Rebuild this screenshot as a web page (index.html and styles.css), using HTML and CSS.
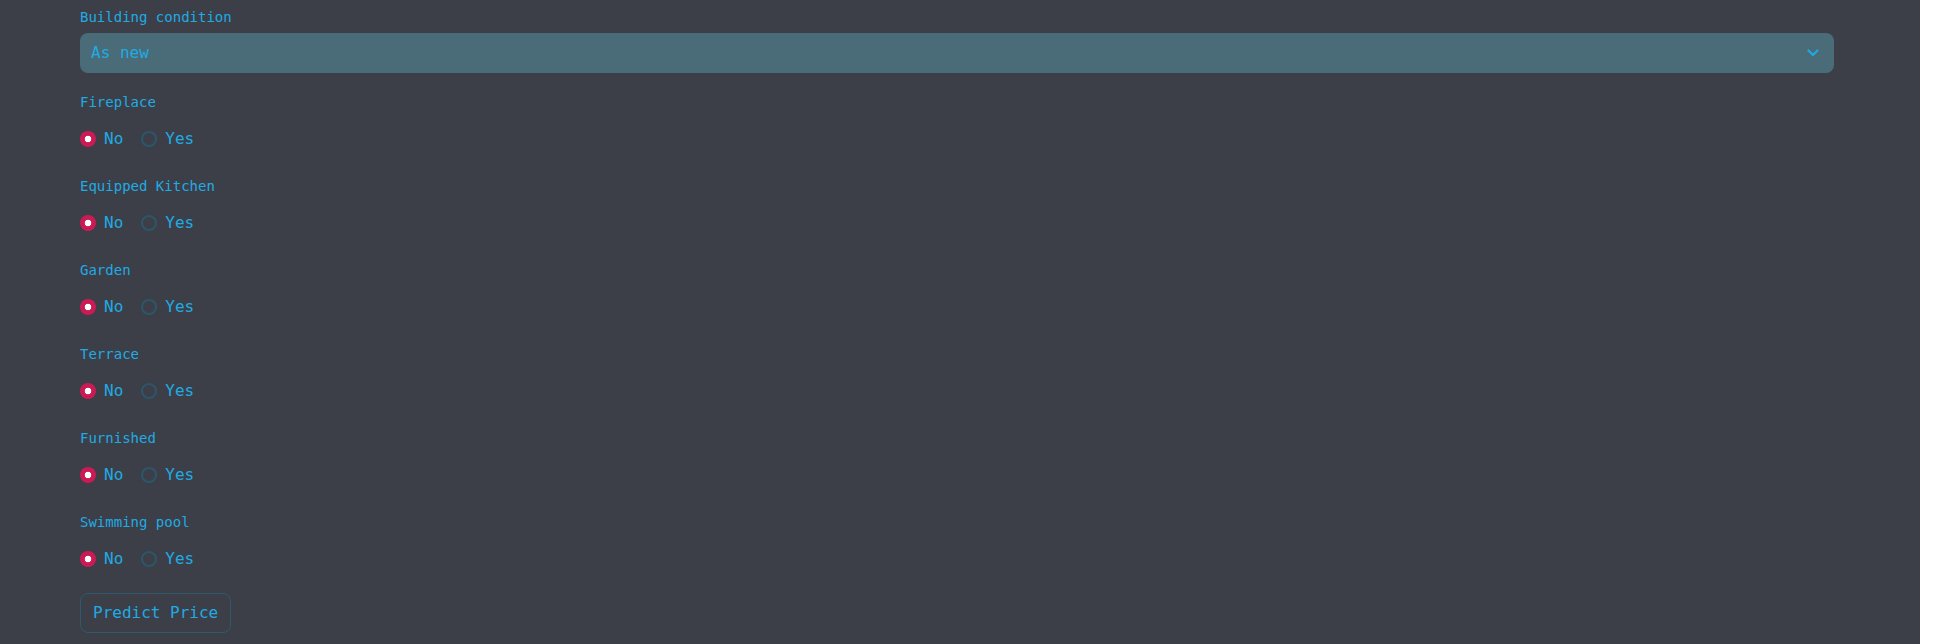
FILE: index.html
```html
<!DOCTYPE html>
<html>
<head>
<meta charset="utf-8">
<link rel="stylesheet" href="styles.css">
</head>
<body>
<div class="page">
  <form class="form">
    <div class="group group-select">
      <div class="label">Building condition</div>
      <div class="select">
        <span class="select-value">As new</span>
        <svg class="chevron" width="12" height="8" viewBox="0 0 12 8"><path d="M1.5 1.5 L6 6 L10.5 1.5" fill="none" stroke="#1fa9e1" stroke-width="2.2" stroke-linecap="round" stroke-linejoin="round"/></svg>
      </div>
    </div>

    <div class="group">
      <div class="label">Fireplace</div>
      <div class="radios">
        <span class="radio checked"></span><span class="opt">No</span>
        <span class="radio"></span><span class="opt">Yes</span>
      </div>
    </div>

    <div class="group">
      <div class="label">Equipped Kitchen</div>
      <div class="radios">
        <span class="radio checked"></span><span class="opt">No</span>
        <span class="radio"></span><span class="opt">Yes</span>
      </div>
    </div>

    <div class="group">
      <div class="label">Garden</div>
      <div class="radios">
        <span class="radio checked"></span><span class="opt">No</span>
        <span class="radio"></span><span class="opt">Yes</span>
      </div>
    </div>

    <div class="group">
      <div class="label">Terrace</div>
      <div class="radios">
        <span class="radio checked"></span><span class="opt">No</span>
        <span class="radio"></span><span class="opt">Yes</span>
      </div>
    </div>

    <div class="group">
      <div class="label">Furnished</div>
      <div class="radios">
        <span class="radio checked"></span><span class="opt">No</span>
        <span class="radio"></span><span class="opt">Yes</span>
      </div>
    </div>

    <div class="group group-last">
      <div class="label">Swimming pool</div>
      <div class="radios">
        <span class="radio checked"></span><span class="opt">No</span>
        <span class="radio"></span><span class="opt">Yes</span>
      </div>
    </div>

    <div class="actions">
      <button type="button" class="btn">Predict Price</button>
    </div>
  </form>
</div>
</body>
</html>
```

FILE: styles.css
```css
html {
  margin: 0;
  background: #ffffff;
}
body {
  margin: 0;
  font-family: "DejaVu Sans Mono", "Liberation Mono", monospace;
  color: #20abe4;
}
.page {
  width: 1920px;
  height: 644px;
  background: #3c3f48;
  overflow: hidden;
}
.form {
  display: flex;
  flex-direction: column;
  padding: 7px 86px 0 80px;
}
.label {
  font-size: 14px;
  line-height: 20px;
  color: #20abe4;
}
.group {
  display: flex;
  flex-direction: column;
  gap: 15px;
  padding-bottom: 25px;
}
.group-select {
  gap: 6px;
  padding-bottom: 19px;
}
.group-last {
  padding-bottom: 22px;
}
.select {
  height: 40px;
  box-sizing: border-box;
  background: #4a6b78;
  border-radius: 8px;
  display: flex;
  align-items: center;
  justify-content: space-between;
  padding: 0 15px 0 11px;
}
.select-value {
  font-size: 16px;
  line-height: 24px;
  color: #20abe4;
}
.chevron {
  display: block;
}
.radios {
  display: flex;
  align-items: center;
  height: 24px;
}
.radio {
  width: 16px;
  height: 16px;
  box-sizing: border-box;
  border-radius: 50%;
  border: 2px solid #2c566a;
  flex: none;
  margin-right: 8px;
}
.radio.checked {
  border: none;
  background: radial-gradient(circle, #ffffff 0 3px, #cc1a55 3.6px);
}
.opt {
  font-size: 16px;
  line-height: 24px;
  margin-right: 18px;
}
.actions {
  display: flex;
}
.btn {
  font-family: "DejaVu Sans Mono", "Liberation Mono", monospace;
  font-size: 16px;
  line-height: 24px;
  color: #20abe4;
  background: #3c3f48;
  border: 1px solid #2e5a6c;
  border-radius: 8px;
  padding: 7px 12px;
  cursor: pointer;
}
```
